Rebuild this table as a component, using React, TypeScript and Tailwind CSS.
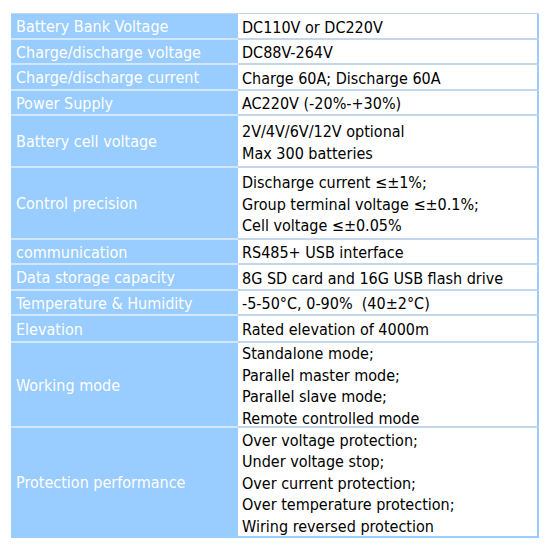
const ROWS: { label: string; lines: string[]; h: number }[] = [
  { label: 'Battery Bank Voltage', lines: ['DC110V or DC220V'], h: 26 },
  { label: 'Charge/discharge voltage', lines: ['DC88V-264V'], h: 25 },
  { label: 'Charge/discharge current', lines: ['Charge 60A; Discharge 60A'], h: 26 },
  { label: 'Power Supply', lines: ['AC220V (-20%-+30%)'], h: 25 },
  { label: 'Battery cell voltage', lines: ['2V/4V/6V/12V optional', 'Max 300 batteries'], h: 52 },
  {
    label: 'Control precision',
    lines: ['Discharge current ≤±1%;', 'Group terminal voltage ≤±0.1%;', 'Cell voltage ≤±0.05%'],
    h: 72,
  },
  { label: 'communication', lines: ['RS485+ USB interface'], h: 25 },
  { label: 'Data storage capacity', lines: ['8G SD card and 16G USB flash drive'], h: 26 },
  { label: 'Temperature & Humidity', lines: ['-5-50°C, 0-90%  (40±2°C)'], h: 25 },
  { label: 'Elevation', lines: ['Rated elevation of 4000m'], h: 27 },
  {
    label: 'Working mode',
    lines: ['Standalone mode;', 'Parallel master mode;', 'Parallel slave mode;', 'Remote controlled mode'],
    h: 85,
  },
  {
    label: 'Protection performance',
    lines: [
      'Over voltage protection;',
      'Under voltage stop;',
      'Over current protection;',
      'Over temperature protection;',
      'Wiring reversed protection',
    ],
    h: 110,
  },
];

export default function App() {
  return (
    <div className="w-[554px] h-[556px] bg-white pt-[13px] pl-[11px] font-['DejaVu_Sans_Condensed','DejaVu_Sans',sans-serif] text-[16px]">
      <div className="w-[528px] flex flex-col border-t border-[#c4d6ea]">
        {ROWS.map((r, i) => {
          const last = i === ROWS.length - 1;
          return (
            <div key={r.label} className="flex" style={{ height: r.h }}>
              <div
                className={`w-[227px] shrink-0 bg-[#99ccff] text-white pl-[5px] pt-[2px] flex items-center ${
                  last ? 'border-b-2 border-[#99ccff]' : 'border-b-2 border-[#d2e7fd]'
                }`}
              >
                {r.label}
              </div>
              <div
                className={`flex-1 bg-white text-black pl-[4px] pt-[3px] flex flex-col justify-center leading-[21.5px] border-r-2 border-r-[#99ccff] ${
                  last ? 'border-b-2 border-b-[#99ccff]' : 'border-b-2 border-b-[#c4d6ea]'
                }`}
              >
                {r.lines.map((l) => (
                  <div key={l} className="whitespace-pre">
                    {l}
                  </div>
                ))}
              </div>
            </div>
          );
        })}
      </div>
    </div>
  );
}
